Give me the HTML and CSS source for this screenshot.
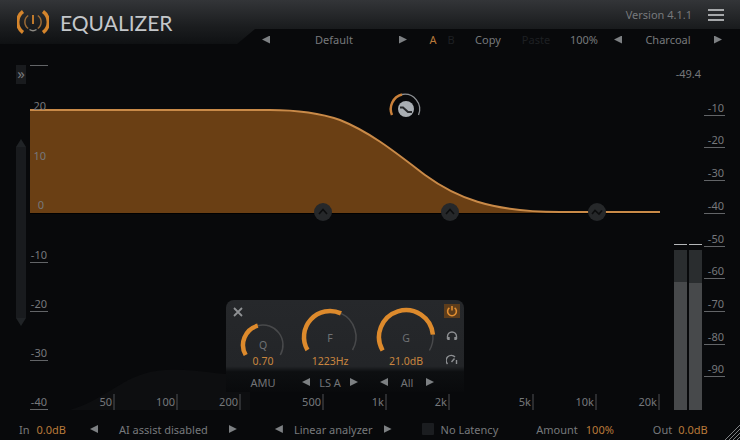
FILE: index.html
```html
<!DOCTYPE html>
<html lang="en">
<head>
    <meta charset="UTF-8">
    <title>Equalizer</title>
    <link rel="stylesheet" href="styles.css">
</head>
<body>
    <div class="app">
        <header class="top">
            <div class="brand">
                <svg class="logo" width="32" height="26" viewBox="0 0 32 26">
                    <path d="M6 2.5 A13 13 0 0 0 6 23.5" class="logo-outer"/>
                    <path d="M26 2.5 A13 13 0 0 1 26 23.5" class="logo-outer"/>
                    <path d="M11.2 6.5 A8 8 0 0 0 11.2 19.5" class="logo-inner"/>
                    <path d="M20.8 6.5 A8 8 0 0 1 20.8 19.5" class="logo-inner"/>
                    <path d="M12.5 20.5 A6 6 0 0 0 19.5 20.5" class="logo-base"/>
                    <path d="M16 6 V15" class="logo-stem"/>
                </svg>
                <h1 class="title">EQUALIZER</h1>
            </div>
            <div class="top-right">
                <div class="version-row">
                    <span class="version">Version 4.1.1</span>
                    <span class="burger"><i></i><i></i><i></i></span>
                </div>
                <div class="toolbar">
                    <span class="arr-l"></span>
                    <span>Default</span>
                    <span class="arr-r"></span>
                    <span class="tb-a orange">A</span>
                    <span class="off">B</span>
                    <span>Copy</span>
                    <span class="off">Paste</span>
                    <span>100%</span>
                    <span class="arr-l"></span>
                    <span>Charcoal</span>
                    <span class="arr-r"></span>
                </div>
            </div>
        </header>

        <main class="stage">
            <svg class="graph" width="740" height="368" viewBox="0 50 740 368">
                <path class="hump" d="M70 410 C110 398 125 372 165 370 C200 368 215 376 250 374 V410 Z"/>

                <!-- левая шкала -->
                <rect class="side-btn" x="16" y="65" width="10" height="19"/>
                <text class="lbl side-mark" x="21" y="79" text-anchor="middle">»</text>
                <rect class="side-btn" x="16" y="147" width="10" height="171"/>
                <path class="side-tri" d="M21 139 L26 147 H16 Z"/>
                <path class="side-tri" d="M16 318 H26 L21 326 Z"/>

                <path class="grid" d="M30 65.5 H48"/>
                <path class="grid" d="M30 113.5 H48 M30 162.5 H48 M30 212.5 H48 M30 262.5 H48 M30 311.5 H48 M30 360.5 H48 M30 409.5 H48"/>

                <!-- кривая -->
                <path class="curve-fill" d="M30 110 H270 C300 110 320 113 340 120 C370 132 395 152 425 175 C455 197 490 212 560 212 H660 V213 H30 Z"/>
                <path class="curve-base" d="M30 213.5 H660"/>
                <path class="curve-line" d="M30 110 H270 C300 110 320 113 340 120 C370 132 395 152 425 175 C455 197 490 212 560 212 H660"/>

                <g text-anchor="end" class="lbl">
                    <text x="46" y="110">20</text>
                    <text x="46" y="160">10</text>
                    <text x="44" y="209">0</text>
                    <text x="47" y="259">-10</text>
                    <text x="47" y="308">-20</text>
                    <text x="47" y="357">-30</text>
                    <text x="47" y="406">-40</text>

                    <text x="112" y="406">50</text>
                    <text x="175" y="406">100</text>
                    <text x="238" y="406">200</text>
                    <text x="321" y="406">500</text>
                    <text x="384" y="406">1k</text>
                    <text x="447" y="406">2k</text>
                    <text x="531" y="406">5k</text>
                    <text x="594" y="406">10k</text>
                    <text x="657" y="406">20k</text>

                    <text x="701" y="78">-49.4</text>
                    <text x="724" y="112">-10</text>
                    <text x="724" y="144">-20</text>
                    <text x="724" y="177">-30</text>
                    <text x="724" y="210">-40</text>
                    <text x="724" y="243">-50</text>
                    <text x="724" y="275">-60</text>
                    <text x="724" y="308">-70</text>
                    <text x="724" y="341">-80</text>
                    <text x="724" y="373">-90</text>
                </g>

                <path class="tick" d="M114 394 V410 M177 394 V410 M240 394 V410 M323 394 V410 M386 394 V410 M449 394 V410 M533 394 V410 M596 394 V410 M659 394 V410"/>
                <path class="grid" d="M704 115.5 H725 M704 147.5 H725 M704 180.5 H725 M704 213.5 H725 M704 246.5 H725 M704 278.5 H725 M704 311.5 H725 M704 344.5 H725 M704 376.5 H725"/>

                <!-- узлы -->
                <g class="node">
                    <circle cx="323" cy="212" r="9"/>
                    <path d="M319 214 L323 209.5 L327 214"/>
                    <circle cx="450" cy="212" r="9"/>
                    <path d="M446 214 L450 209.5 L454 214"/>
                    <circle cx="597" cy="212" r="9"/>
                    <path d="M592 214 L595 210.5 L599 214 L602 210.5"/>
                </g>
                <circle class="float-disc" cx="406" cy="109" r="8"/>
                <path class="float-glyph" d="M400 107.5 H403 L408 112 H412"/>
                <path class="float-orange" d="M392 115 A15 15 0 0 1 402 94.5"/>
                <path class="float-grey" d="M402 94.5 A15 15 0 0 1 418.5 115"/>

                <!-- индикаторы -->
                <path class="meter-cap" d="M674 244.5 H687 M689 244.5 H702"/>
                <rect class="meter-dark" x="674" y="250" width="13" height="32"/>
                <rect class="meter-dark" x="689" y="250" width="13" height="33"/>
                <rect class="meter-fill" x="674" y="282" width="13" height="128"/>
                <rect class="meter-fill" x="689" y="283" width="13" height="127"/>
            </svg>

            <section class="panel">
                <svg class="close" width="10" height="10" viewBox="0 0 10 10"><path d="M1 1 L9 9 M9 1 L1 9"/></svg>
                <div class="knob">
                    <svg width="60" height="70" viewBox="0 0 60 70">
                        <path class="knob-rest" d="M24.8 25.7 A20 20 0 0 1 47.3 55"/>
                        <path class="knob-val" d="M12.7 55 A20 20 0 0 1 24.8 25.7"/>
                        <text class="knob-letter" x="30" y="49">Q</text>
                        <text class="knob-num" x="30" y="65">0.70</text>
                    </svg>
                </div>
                <div class="knob">
                    <svg width="60" height="70" viewBox="0 0 60 70">
                        <path class="knob-rest" d="M41 13.4 A26 26 0 0 1 52.5 50"/>
                        <path class="knob-val" d="M7.5 50 A26 26 0 0 1 41 13.4"/>
                        <text class="knob-letter" x="30" y="42">F</text>
                        <text class="knob-num" x="30" y="65">1223Hz</text>
                    </svg>
                </div>
                <div class="knob knob-g">
                    <svg width="60" height="70" viewBox="0 0 60 70">
                        <path class="knob-rest" d="M56.9 34.6 A27 27 0 0 1 53.4 50.5"/>
                        <path class="knob-val" d="M6.6 50.5 A27 27 0 1 1 56.9 34.6"/>
                        <text class="knob-letter" x="30" y="42">G</text>
                        <text class="knob-num" x="30" y="65">21.0dB</text>
                    </svg>
                </div>
                <div class="side-icons">
                    <span class="power-box">
                        <svg width="12" height="12" viewBox="0 0 12 12"><path d="M3.4 2.8 A4.4 4.4 0 1 0 8.6 2.8 M6 1 V5.6"/></svg>
                    </span>
                    <svg class="ico" width="12" height="12" viewBox="0 0 12 12"><path d="M1.5 9 V6.5 A4.5 4.5 0 0 1 10.5 6.5 V9"/><path class="ico-thick" d="M2.5 7 V10 M9.5 7 V10"/></svg>
                    <svg class="ico" width="12" height="12" viewBox="0 0 12 12"><path d="M1.5 10 A5 5 0 0 1 9 3 M10.5 6 V10"/><path d="M5.5 8 L8.5 4.5"/></svg>
                </div>
                <div class="sel">AMU</div>
                <div class="sel sel-wide"><span class="arr-l"></span><span>LS A</span><span class="arr-r"></span></div>
                <div class="sel sel-wide sel-all"><span class="arr-l"></span><span>All</span><span class="arr-r"></span></div>
            </section>
        </main>

        <footer class="bottom">
            <span class="f-in">In</span>
            <span class="orange f-gain">0.0dB</span>
            <span class="arr-l f-a1"></span>
            <span class="f-ai">AI assist disabled</span>
            <span class="arr-r f-a2"></span>
            <span class="arr-l f-a3"></span>
            <span class="f-lin">Linear analyzer</span>
            <span class="arr-r f-a4"></span>
            <span class="check"></span>
            <span class="f-lat">No Latency</span>
            <span class="f-amt">Amount</span>
            <span class="orange f-pct">100%</span>
            <span class="f-out">Out</span>
            <span class="orange f-out-gain">0.0dB</span>
            <svg class="grip" width="16" height="16" viewBox="0 0 16 16"><path d="M16 1 L1 16 M16 5 L5 16 M16 9 L9 16 M16 13 L13 16"/></svg>
        </footer>
    </div>
</body>
</html>
```

FILE: styles.css
```css
* {
    box-sizing: border-box;
}

body {
    margin: 0;
    background-color: #08090b;
    color: #77797c;
    font-family: "Noto Sans", sans-serif;
    font-size: 11px;
}

.app {
    width: 740px;
    height: 440px;
    overflow: hidden;
    display: flex;
    flex-direction: column;
}

.orange {
    color: #b97a3a;
}

.off {
    color: #1e2023;
}

/* стрелки */
.arr-l,
.arr-r {
    display: inline-block;
    width: 8px;
    height: 8px;
    background-color: #7d8083;
}

.arr-l {
    clip-path: polygon(0 50%, 100% 0, 100% 100%);
}

.arr-r {
    clip-path: polygon(0 0, 100% 50%, 0 100%);
}

/* шапка */
.top {
    position: relative;
    display: flex;
    height: 50px;
}

.top::before {
    content: "";
    position: absolute;
    inset: 0;
    height: 44px;
    background: linear-gradient(#333538, #1b1d1f 60%, #0f1113);
    clip-path: polygon(0 0, 100% 0, 100% 29px, 255px 29px, 237px 44px, 0 44px);
}

.brand {
    position: relative;
    width: 240px;
    height: 44px;
    display: flex;
    align-items: center;
    padding-left: 17px;
}

.title {
    margin: 0 0 0 11px;
    font-family: Lato, "Noto Sans", sans-serif;
    font-size: 21px;
    font-weight: 400;
    color: #c4c7ca;
}

.logo-outer {
    fill: none;
    stroke: #d5852c;
    stroke-width: 3.5;
}

.logo-inner {
    fill: none;
    stroke: #9b6a35;
    stroke-width: 1.5;
}

.logo-base {
    fill: none;
    stroke: #8d8a84;
    stroke-width: 1.5;
}

.logo-stem {
    stroke: #c07a2c;
    stroke-width: 2;
}

.top-right {
    position: relative;
    flex: 1;
}

.version-row {
    height: 29px;
    display: flex;
    align-items: center;
    justify-content: flex-end;
}

.burger {
    display: flex;
    flex-direction: column;
    gap: 3px;
    width: 16px;
    margin: 0 16px 0 16px;
}

.burger i {
    height: 2px;
    background-color: #a6a8aa;
}

.toolbar {
    display: grid;
    grid-template-columns: 20px 116px 22px 29px 16px 58px 38px 58px 10px 90px 10px;
    align-items: center;
    justify-items: center;
    height: 21px;
    padding-left: 16px;
}

.tb-a {
    padding-left: 9px;
}

/* график */
.stage {
    position: relative;
    height: 368px;
}

.graph {
    display: block;
}

.graph text {
    font-family: "Noto Sans", sans-serif;
    font-size: 11px;
}

.graph .side-mark {
    font-size: 15px;
}

.lbl {
    fill: #76787b;
}

.hump {
    fill: #0d0e10;
}

.side-btn {
    fill: #191b1e;
}

.side-tri {
    fill: #202326;
}

.grid {
    stroke: #626467;
    stroke-width: 1;
    fill: none;
}

.tick {
    stroke: #4f5154;
    stroke-width: 1;
    fill: none;
}

.curve-fill {
    fill: #6a3f14;
}

.curve-base {
    stroke: #000;
    stroke-width: 1;
}

.curve-line {
    fill: none;
    stroke: #c98a48;
    stroke-width: 2;
}

.node circle {
    fill: #26282a;
}

.node path {
    fill: none;
    stroke: #0c0d0e;
    stroke-width: 1.6;
}

.float-disc {
    fill: #a9aeb3;
}

.float-glyph {
    fill: none;
    stroke: #26282b;
    stroke-width: 2;
}

.float-orange {
    fill: none;
    stroke: #c9803a;
    stroke-width: 2.5;
}

.float-grey {
    fill: none;
    stroke: #8d9094;
    stroke-width: 1.3;
}

.meter-cap {
    stroke: #b5b7b9;
    stroke-width: 1;
}

.meter-dark {
    fill: #2a2d2f;
}

.meter-fill {
    fill: #47494b;
}

/* панель полосы */
.panel {
    position: absolute;
    left: 226px;
    top: 250px;
    width: 238px;
    height: 92px;
    display: grid;
    grid-template-columns: 74px 60px 82px 20px;
    grid-template-rows: 70px 22px;
    border-radius: 8px 8px 0 0;
    background: linear-gradient(#26282b, #232528 72%, #0d0f11 78%, #090a0c);
}

.close {
    position: absolute;
    left: 7px;
    top: 7px;
}

.close path {
    fill: none;
    stroke: #8f9194;
    stroke-width: 1.8;
}

.knob {
    display: flex;
    justify-content: center;
}

.knob-g {
    padding-left: 10px;
}

.knob-val {
    fill: none;
    stroke: #dd8a2c;
    stroke-width: 4.5;
}

.knob-rest {
    fill: none;
    stroke: #48494b;
    stroke-width: 1.5;
}

.knob text {
    font-family: "Noto Sans", sans-serif;
    text-anchor: middle;
    font-size: 10.5px;
}

.knob-letter {
    fill: #6f7174;
}

.knob-num {
    fill: #c9853f;
}

.side-icons {
    grid-row: 1 / 3;
    grid-column: 4;
    display: flex;
    flex-direction: column;
    align-items: center;
    gap: 12px;
    padding-top: 4px;
}

.power-box {
    display: flex;
    align-items: center;
    justify-content: center;
    width: 16px;
    height: 14px;
    background-color: #5d3d1c;
}

.power-box path {
    fill: none;
    stroke: #e08d30;
    stroke-width: 1.6;
}

.ico path {
    fill: none;
    stroke: #8e9093;
    stroke-width: 1.4;
}

.ico .ico-thick {
    stroke-width: 2.4;
}

.sel {
    display: flex;
    align-items: center;
    justify-content: center;
    padding-top: 2px;
    color: #727477;
}

.sel-wide {
    justify-content: space-between;
    padding: 2px 2px 0;
}

.sel-all {
    padding: 2px 8px 0 20px;
}

/* нижняя строка */
.bottom {
    position: relative;
    flex: 1;
    display: flex;
    align-items: center;
    padding-left: 19px;
}

.f-gain {
    margin-left: 7px;
}

.f-a1 {
    margin-left: 24px;
}

.f-ai {
    margin-left: 21px;
}

.f-a2 {
    margin-left: 21px;
}

.f-a3 {
    margin-left: 38px;
}

.f-lin {
    margin-left: 11px;
}

.f-a4 {
    margin-left: 11px;
}

.check {
    width: 12px;
    height: 12px;
    margin-left: 30px;
    background-color: #1b1d20;
    border-radius: 1px;
}

.f-lat {
    margin-left: 7px;
}

.f-amt {
    margin-left: 38px;
}

.f-pct {
    margin-left: 8px;
}

.f-out {
    margin-left: 39px;
}

.f-out-gain {
    margin-left: 6px;
}

.grip {
    position: absolute;
    right: 0;
    bottom: 0;
}

.grip path {
    fill: none;
    stroke: #7f8184;
    stroke-width: 1;
}
```
